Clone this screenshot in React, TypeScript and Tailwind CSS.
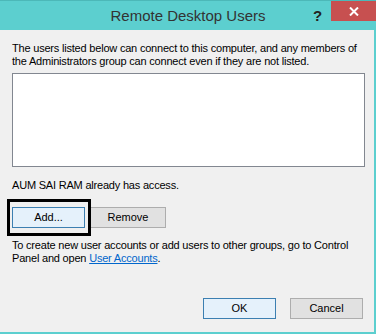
import React from 'react'

function Button({ label, focused, className = '' }: { label: string; focused?: boolean; className?: string }) {
  return (
    <button
      className={
        'flex h-[21px] items-center justify-center border text-[11px] text-black ' +
        (focused ? 'border-[#3c7fb1] bg-[#e5f1fb] ' : 'border-[#adadad] bg-[#e1e1e1] ') +
        className
      }
    >
      {label}
    </button>
  )
}

export default function App() {
  return (
    <div
      className="flex h-[334px] w-[376px] flex-col bg-[#5ccfcf]"
      style={{ fontFamily: '"Liberation Sans", Arial, sans-serif' }}
    >
      {/* title bar */}
      <div className="relative flex h-[30px] shrink-0 items-center justify-center border-t border-[#4cb8b8]">
        <span className="pt-[1px] text-[15px] text-[#333]">Remote Desktop Users</span>
        <span className="absolute left-[313px] top-[4px] text-[15px] font-bold text-[#222]">?</span>
        <div className="absolute right-0 top-0 flex h-[20px] w-[45px] items-center justify-center bg-[#c75050]">
          <svg width="10" height="9" viewBox="0 0 10 9">
            <path d="M1 0.5 L9 8.5 M9 0.5 L1 8.5" stroke="#fff" strokeWidth="2" />
          </svg>
        </div>
      </div>

      {/* body */}
      <div className="mb-[2px] mr-[2px] flex flex-1 flex-col bg-[#f0f0f0] px-[12px] text-[11px] leading-[13px] tracking-[-0.2px] text-black">
        <p className="mt-[12px] whitespace-nowrap">
          The users listed below can connect to this computer, and any members of
          <br />
          the Administrators group can connect even if they are not listed.
        </p>
        <div className="mt-[5px] h-[94px] w-[353px] border border-[#828790] bg-white" />
        <p className="mt-[12px]">AUM SAI RAM already has access.</p>
        <div className="mt-[15px] flex gap-[5px] tracking-normal">
          <div className="relative">
            <Button label="Add..." focused className="w-[73px]" />
            <span className="pointer-events-none absolute -bottom-[8px] -left-[5px] -right-[6px] -top-[8px] border-[3px] border-black" />
          </div>
          <Button label="Remove" className="w-[76px]" />
        </div>
        <p className="mt-[11px] whitespace-nowrap">
          To create new user accounts or add users to other groups, go to Control
          <br />
          Panel and open <span className="text-[#0066cc] underline">User Accounts</span>.
        </p>
        <div className="mb-[13px] mr-[-1px] mt-auto flex justify-end gap-[14px] tracking-normal">
          <Button label="OK" focused className="w-[73px]" />
          <Button label="Cancel" className="w-[73px]" />
        </div>
      </div>
    </div>
  )
}
